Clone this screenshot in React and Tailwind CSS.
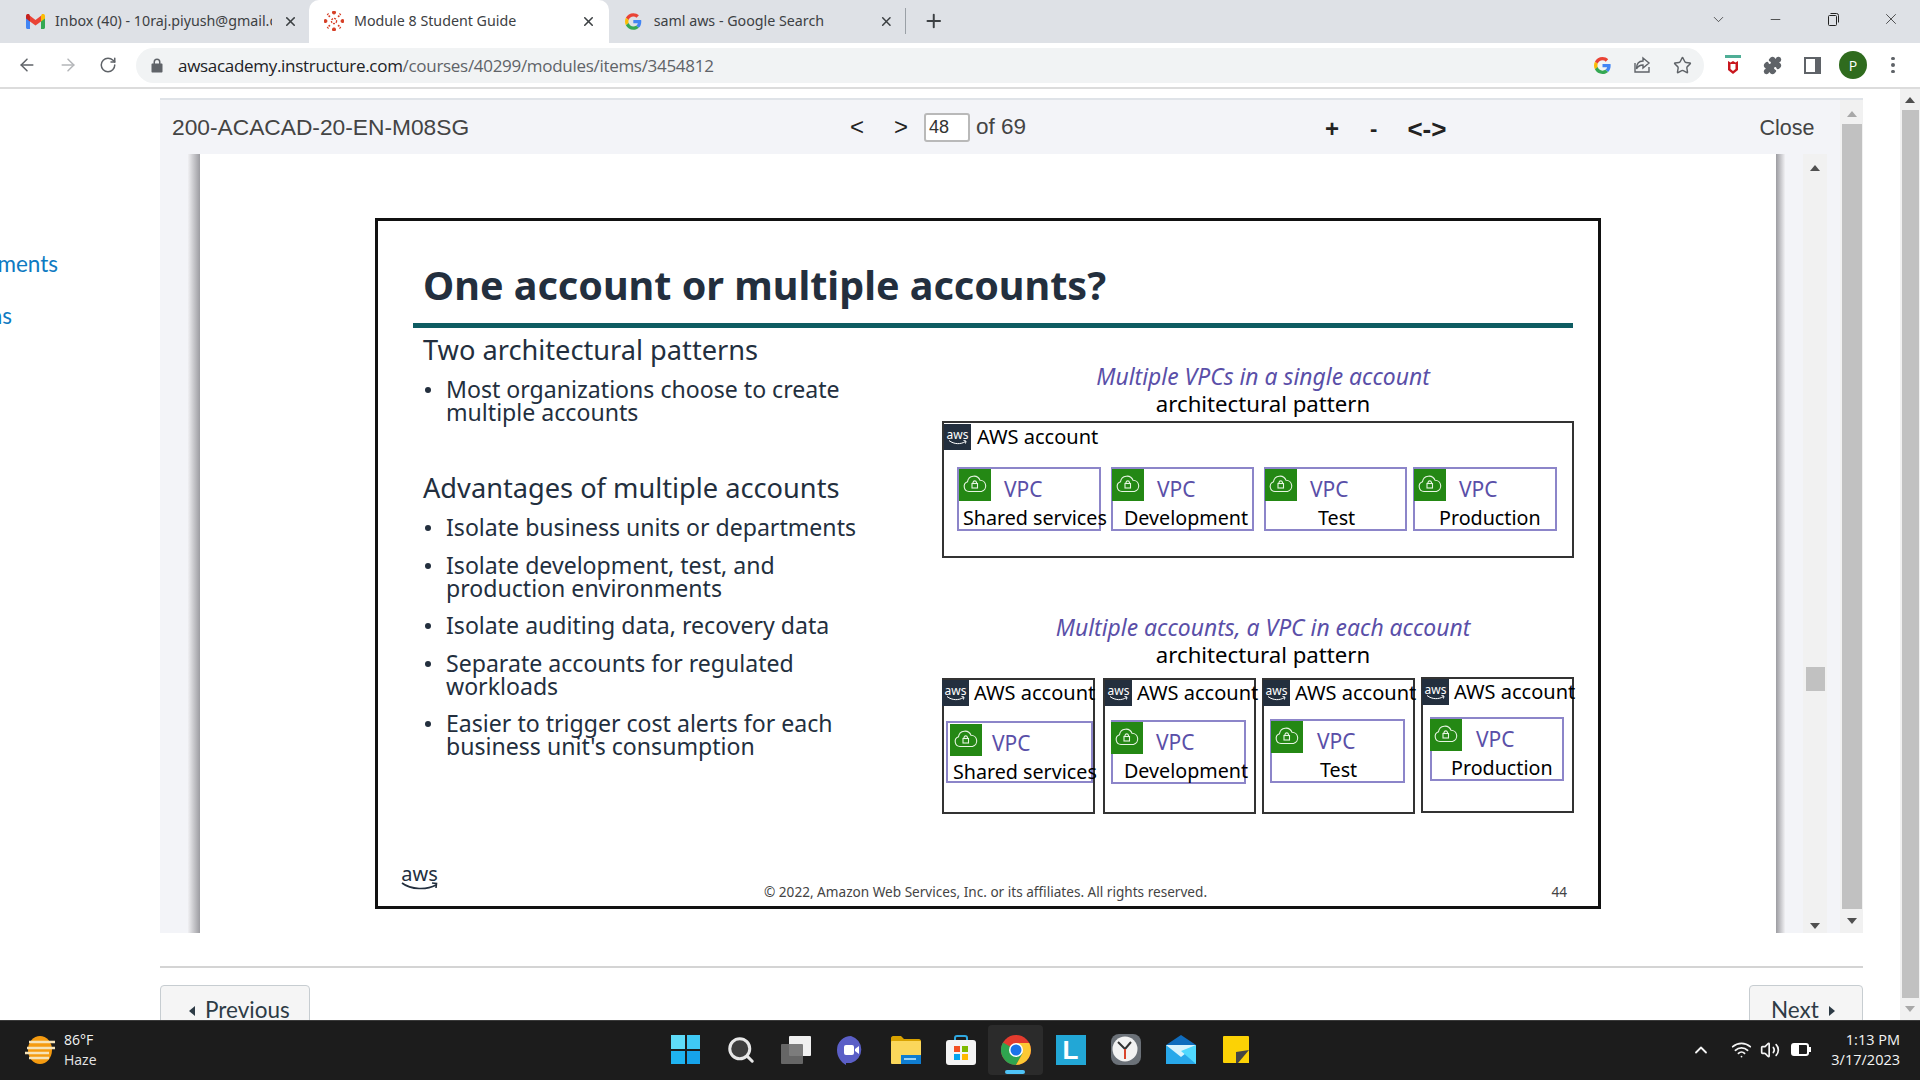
import { ArrowLeft, ArrowRight, RotateCw, X, Plus, ChevronDown, Minus, Star, Puzzle, ChevronUp, Volume2, Wifi, Search } from 'lucide-react';

const slideFont = "font-['Noto_Sans',sans-serif]";
const uiFont = "font-['Open_Sans',sans-serif]";

const GoogleG = ({ size = 18 }) => (
    <svg width={size} height={size} viewBox="0 0 48 48">
        <path fill="#EA4335" d="M24 9.5c3.54 0 6.71 1.22 9.21 3.6l6.85-6.85C35.9 2.38 30.47 0 24 0 14.62 0 6.51 5.38 2.56 13.22l7.98 6.19C12.43 13.72 17.74 9.5 24 9.5z" />
        <path fill="#4285F4" d="M46.98 24.55c0-1.57-.15-3.09-.38-4.55H24v9.02h12.94c-.58 2.96-2.26 5.48-4.78 7.18l7.73 6c4.51-4.18 7.09-10.36 7.09-17.65z" />
        <path fill="#FBBC05" d="M10.53 28.59c-.48-1.45-.76-2.99-.76-4.59s.27-3.14.76-4.59l-7.98-6.19C.92 16.46 0 20.12 0 24c0 3.88.92 7.54 2.56 10.78l7.97-6.19z" />
        <path fill="#34A853" d="M24 48c6.48 0 11.93-2.13 15.89-5.81l-7.73-6c-2.15 1.45-4.92 2.3-8.16 2.3-6.26 0-11.57-4.22-13.47-9.91l-7.98 6.19C6.51 42.62 14.62 48 24 48z" />
    </svg>
);

const GmailIcon = () => (
    <svg width="19" height="15" viewBox="0 0 19 15">
        <path fill="#4285F4" d="M0 2v11.5C0 14.3.7 15 1.5 15H4V6z" />
        <path fill="#34A853" d="M15 6v9h2.5c.8 0 1.5-.7 1.5-1.5V2z" />
        <path fill="#EA4335" d="M4 7.5V1.8L9.5 6 15 1.8v5.7L9.5 11.5z" />
        <path fill="#C5221F" d="M0 2c0-2 2.2-2.6 3.2-1.8L4 1.8v5.7L0 4.5z" />
        <path fill="#FBBC05" d="M19 2c0-2-2.2-2.6-3.2-1.8L15 1.8v5.7l4-3z" />
    </svg>
);

const CanvasIcon = () => (
    <svg width="20" height="20" viewBox="0 0 20 20" fill="#d64027">
        <circle cx="10" cy="10" r="2.6" fill="none" stroke="#d64027" strokeWidth="1.3" strokeDasharray="2 1" />
        <path d="M3.4 10A1.9 1.9 0 0 0 .1 8.6a9.9 9.9 0 0 0 0 2.8A1.9 1.9 0 0 0 3.4 10zM16.6 10a1.9 1.9 0 0 0 3.3 1.4 9.9 9.9 0 0 0 0-2.8 1.9 1.9 0 0 0-3.3 1.4zM10 3.4A1.9 1.9 0 0 0 11.4.1a9.9 9.9 0 0 0-2.8 0A1.9 1.9 0 0 0 10 3.4zM10 16.6a1.9 1.9 0 0 0-1.4 3.3 9.9 9.9 0 0 0 2.8 0 1.9 1.9 0 0 0-1.4-3.3z" />
        <circle cx="5.3" cy="5.3" r="1" /><circle cx="14.7" cy="5.3" r="1" /><circle cx="5.3" cy="14.7" r="1" /><circle cx="14.7" cy="14.7" r="1" />
        <path d="M2.9 2.9 5 2 4.5 3.6 3 4.5zM17.1 2.9 15 2l.5 1.6 1.5.9zM2.9 17.1 5 18l-.5-1.6-1.5-.9zM17.1 17.1 15 18l.5-1.6 1.5-.9z" />
    </svg>
);

const Tab = ({ icon, title, active, width, textClass, children }) => (
    <div className={`flex items-center h-[43px] pb-px shrink-0 ${width} ${active ? 'bg-white rounded-t-[10px]' : ''}`}>
        {icon}
        <span className={`overflow-hidden whitespace-nowrap text-[14.25px] text-[#3c4043] ${textClass}`}>{title}</span>
        {children}
    </div>
);

const TabStrip = () => (
    <div className="h-[43px] bg-[#dee1e6] flex items-center shrink-0">
        <Tab
            width="w-[309px] pl-[26px]"
            textClass="w-[217px] ml-[10px]"
            icon={<GmailIcon />}
            title="Inbox (40) - 10raj.piyush@gmail.com"
        >
            <X size={15} strokeWidth={2.5} className="ml-[11px] text-[#3c4043]" />
        </Tab>
        <Tab
            active
            width="w-[300px] pl-[15px]"
            textClass="w-[218px] ml-[10px]"
            icon={<CanvasIcon />}
            title="Module 8 Student Guide"
        >
            <X size={15} strokeWidth={2.5} className="ml-[9px] text-[#3c4043]" />
        </Tab>
        <Tab
            width="w-[336px] pl-[16px]"
            textClass="w-[230px] ml-[12px]"
            icon={<GoogleG size={17} />}
            title="saml aws - Google Search"
        >
            <X size={15} strokeWidth={2.5} className="text-[#3c4043]" />
            <div className="w-px h-[26px] bg-[#9aa0a6] ml-[12px]" />
            <Plus size={22} strokeWidth={2.2} className="ml-[17px] text-[#3c4043]" />
        </Tab>
        <div className="ml-auto flex items-center h-full pb-[5px] text-[#222]">
            <ChevronDown size={17} strokeWidth={1} className="mr-[41px]" />
            <Minus size={15} strokeWidth={1.2} className="mr-[43px]" />
            <svg width="14" height="14" viewBox="0 0 14 14" fill="none" stroke="#222" className="mr-[42px]">
                <rect x="2.5" y="3.5" width="8" height="10" rx="1" />
                <path d="M4.5 1.5h6a2 2 0 0 1 2 2v7" />
            </svg>
            <X size={18} strokeWidth={1} className="mr-[20px]" />
        </div>
    </div>
);

const Toolbar = () => (
    <div className="h-[46px] bg-white border-b-2 border-[#dcdcdc] flex items-center shrink-0">
        <ArrowLeft size={20} strokeWidth={1.8} className="ml-[17px] text-[#5f6368]" />
        <ArrowRight size={20} strokeWidth={1.8} className="ml-[21px] text-[#b4b6b9]" />
        <RotateCw size={18} strokeWidth={2} className="ml-[21px] text-[#5f6368]" />
        <div className="ml-[19px] w-[1568px] h-[35px] bg-[#f1f3f4] rounded-full flex items-center">
            <svg width="12" height="15" viewBox="0 0 12 15" className="ml-[15px]" fill="#5f6368">
                <path d="M1.5 5.5h1V4a3.5 3.5 0 0 1 7 0v1.5h1c.6 0 1 .4 1 1v7c0 .6-.4 1-1 1h-9c-.6 0-1-.4-1-1v-7c0-.6.4-1 1-1zM4 5.5h4V4a2 2 0 0 0-4 0z" />
            </svg>
            <span className={`ml-[15px] text-[17px] leading-none whitespace-nowrap text-[#202124] ${uiFont} tracking-[-0.3px]`}>
                awsacademy.instructure.com<span className="text-[#5f6368]">/courses/40299/modules/items/3454812</span>
            </span>
            <div className="ml-auto flex items-center">
                <GoogleG size={17} />
                <svg width="20" height="20" viewBox="0 0 20 20" fill="none" stroke="#5f6368" strokeWidth="1.4" className="ml-[21px]">
                    <path d="M3 8v9h14v-5" />
                    <path d="M11 3l6 5-6 5v-3c-3 0-5 1-6.500 4 0-5 2.500-8 6.500-8z" />
                </svg>
                <Star size={19} strokeWidth={1.8} className="ml-[21px] mr-[12px] text-[#5f6368]" />
            </div>
        </div>
        <svg width="16" height="20" viewBox="0 0 16 20" className="ml-[21px]">
            <rect x="0" y="0" width="16" height="3" fill="#4fae96" />
            <path d="M3 6l2.500 1.500L8 6l2.500 1.500L13 6v9l-5 4-5-4z" fill="#c8161d" />
            <path d="M5.500 9h5v5l-2.500 2-2.500-2z" fill="#fff" />
        </svg>
        <Puzzle size={19} fill="#5f6368" className="ml-[22px] text-[#5f6368]" />
        <div className="ml-[22px] w-[17px] h-[17px] border-2 border-[#5f6368] border-r-[6px]" />
        <div className="ml-[18px] w-[28px] h-[28px] rounded-full bg-[#2f6b1e] flex items-center justify-center text-white text-[14px] font-['Open_Sans',sans-serif]">P</div>
        <div className="ml-[24px] flex flex-col gap-[3px]">
            <div className="w-[3.5px] h-[3.5px] rounded-full bg-[#5f6368]" />
            <div className="w-[3.5px] h-[3.5px] rounded-full bg-[#5f6368]" />
            <div className="w-[3.5px] h-[3.5px] rounded-full bg-[#5f6368]" />
        </div>
    </div>
);

const Tri = ({ dir = 'up', color = '#505050', className = '' }) => (
    <svg width="10" height="6" viewBox="0 0 10 6" className={className}>
        <path d={dir === 'up' ? 'M5 0l5 6H0z' : 'M0 0h10L5 6z'} fill={color} />
    </svg>
);

const SideTri = ({ dir, className = '' }) => (
    <svg width="8" height="10" viewBox="0 0 8 10" className={className}>
        <path d={dir === 'left' ? 'M7 0v10L1 5z' : 'M1 0v10l6-5z'} fill="#2d3b45" />
    </svg>
);

const AwsMark = ({ className = '' }) => (
    <div className={`bg-[#232f3e] shrink-0 flex flex-col items-center justify-center text-white ${className}`}>
        <span className={`text-[12px] leading-[11px] ${slideFont}`}>aws</span>
        <svg width="19" height="5" viewBox="0 0 19 5" fill="none" stroke="#fff" strokeWidth="1">
            <path d="M1 0.500c5 4 12 4 16.500 1M15.500 0.500l2.500 0.500-0.500 2.500" />
        </svg>
    </div>
);

const VpcIcon = ({ className = '' }) => (
    <div className={`w-[32px] h-[32px] bg-[#248814] shrink-0 flex items-center justify-center ${className}`}>
        <svg width="26" height="24" viewBox="0 0 26 24" fill="none" stroke="#e8f5e4" strokeWidth="1.1" className="-mt-[3px]">
            <path d="M7 19.500a5 5 0 0 1-1.500-9.700 6.500 6.500 0 0 1 12.500-1.500 5.700 5.700 0 0 1 1.500 11.200z" />
            <rect x="10" y="11.500" width="5.500" height="4.500" />
            <path d="M11 11.500v-1.200a1.800 1.800 0 0 1 3.500 0v1.200" />
        </svg>
    </div>
);

const Vpc = ({ label, box, iconClass = '', vpcClass = 'ml-[13px]', labelClass }) => (
    <div className={`border-2 border-[#8c85c9] shrink-0 ${box}`}>
        <div className="flex items-start h-[37px]">
            <VpcIcon className={iconClass} />
            <span className={`mt-[7px] text-[21px] leading-[26px] text-[#5a4fa8] ${vpcClass}`}>VPC</span>
        </div>
        <div className={`text-[19.7px] leading-[24px] text-black whitespace-nowrap ${labelClass}`}>{label}</div>
    </div>
);

const Account = ({ box, logoClass = '', children }) => (
    <div className={`border-2 border-[#333] h-[136px] shrink-0 ${box}`}>
        <div className="flex items-start">
            <AwsMark className={`h-[26px] w-[27px] ${logoClass}`} />
            <span className="ml-[5px] text-[20px] leading-[26px] text-black whitespace-nowrap">AWS account</span>
        </div>
        {children}
    </div>
);

const Bullet = ({ lines }) => (
    <div className="flex mb-[14.500px]">
        <div className="w-[23px] pt-[9px] pl-[2px] shrink-0">
            <div className="w-[6px] h-[6px] rounded-full bg-[#232f3e]" />
        </div>
        <div className="text-[23.1px] leading-[23px] text-[#232f3e] whitespace-nowrap">
            {lines.map((line) => <div key={line}>{line}</div>)}
        </div>
    </div>
);

const DiagramHeading = ({ text, top }) => (
    <div className={`pl-[10px] text-center ${top}`}>
        <div className="text-[22.9px] leading-[30px] italic text-[#5a4fa8] whitespace-nowrap">{text}</div>
    </div>
);

const Slide = () => (
    <div className={`ml-[175px] mt-[64px] w-[1226px] h-[691px] border-[3px] border-[#111] flex flex-col ${slideFont}`}>
        <h1 className="mt-[39px] ml-[45px] text-[39.5px] leading-[50px] font-bold text-[#232f3e] whitespace-nowrap">One account or multiple accounts?</h1>
        <div className="mt-[13px] ml-[35px] w-[1160px] h-[5px] bg-[#0e5c62]" />

        <div className="flex">
            {/* Left column */}
            <div className="w-[564px] pl-[45px] shrink-0">
                <div className="mt-[6px] text-[27.2px] leading-[32px] text-[#232f3e]">Two architectural patterns</div>
                <div className="mt-[12px]">
                    <Bullet lines={['Most organizations choose to create', 'multiple accounts']} />
                </div>
                <div className="mt-[48px] text-[27.2px] leading-[32px] text-[#232f3e]">Advantages of multiple accounts</div>
                <div className="mt-[12px]">
                    <Bullet lines={['Isolate business units or departments']} />
                    <Bullet lines={['Isolate development, test, and', 'production environments']} />
                    <Bullet lines={['Isolate auditing data, recovery data']} />
                    <Bullet lines={['Separate accounts for regulated', 'workloads']} />
                    <Bullet lines={['Easier to trigger cost alerts for each', "business unit's consumption"]} />
                </div>
            </div>

            {/* Right column */}
            <div className="w-[632px] shrink-0">
                <DiagramHeading top="mt-[34px]" text="Multiple VPCs in a single account" />
                <div className="pl-[10px] text-center text-[22.2px] leading-[24px] text-black">architectural pattern</div>
                <div className="mt-[5px] pt-px border-2 border-[#333] h-[137px]">
                    <div className="flex items-start">
                        <AwsMark className="h-[26px] w-[27px]" />
                        <span className="ml-[6px] text-[20px] leading-[26px] text-black">AWS account</span>
                    </div>
                    <div className="flex ml-[13px] mt-[17px]">
                        <Vpc box="w-[144px] h-[64px]" label="Shared services" labelClass="pl-[4px]" />
                        <Vpc box="w-[143px] h-[64px] ml-[10px]" iconClass="-ml-px" label="Development" labelClass="pl-[11px]" />
                        <Vpc box="w-[143px] h-[64px] ml-[10px]" iconClass="-ml-px" label="Test" labelClass="pl-[52px]" />
                        <Vpc box="w-[144px] h-[64px] ml-[6px]" iconClass="-ml-px" label="Production" labelClass="pl-[24px]" />
                    </div>
                </div>

                <DiagramHeading top="mt-[55px]" text="Multiple accounts, a VPC in each account" />
                <div className="pl-[10px] text-center text-[22.2px] leading-[24px] text-black">architectural pattern</div>
                <div className="mt-[11px] flex items-start">
                    <Account box="w-[153px]" logoClass="-ml-[2px]">
                        <Vpc box="w-[147px] h-[62px] ml-[2px] mt-[15px]" iconClass="ml-[2px] mt-px" vpcClass="ml-[10px]" label="Shared services" labelClass="pl-[5px]" />
                    </Account>
                    <Account box="w-[153px] ml-[8px]">
                        <Vpc box="w-[135px] h-[64px] ml-[6px] mt-[14px]" iconClass="-ml-[2px]" label="Development" labelClass="pl-[11px]" />
                    </Account>
                    <Account box="w-[153px] ml-[6px]" logoClass="-ml-px">
                        <Vpc box="w-[135px] h-[64px] ml-[6px] mt-[13px]" iconClass="-ml-px" vpcClass="ml-[14px]" label="Test" labelClass="pl-[48px]" />
                    </Account>
                    <Account box="w-[153px] ml-[6px] -mt-px" logoClass="-ml-px">
                        <Vpc box="w-[134px] h-[64px] ml-[7px] mt-[12px]" iconClass="-ml-[2px]" vpcClass="ml-[14px]" label="Production" labelClass="pl-[19px]" />
                    </Account>
                </div>
            </div>
        </div>

        {/* Footer */}
        <div className="mt-auto flex items-end mb-[5px]">
            <div className="ml-[23px] w-[37px] mb-[11px] flex flex-col items-center text-[#232f3e]">
                <span className="text-[20px] leading-[16px]">aws</span>
                <svg width="37" height="8" viewBox="0 0 37 8" fill="none" stroke="#232f3e" strokeWidth="1.600">
                    <path d="M1 1c9 7 25 7 34 2M31 1l4.500 0.500-0.500 4.500" />
                </svg>
            </div>
            <span className="ml-[326px] text-[13.6px] leading-[18px] text-[#444] whitespace-nowrap">© 2022, Amazon Web Services, Inc. or its affiliates. All rights reserved.</span>
            <span className="ml-auto mr-[31px] text-[13.6px] leading-[18px] text-[#444]">44</span>
        </div>
    </div>
);

const Viewer = () => (
    <div className="h-[835px] flex bg-[#f3f4f8] border-t-2 border-[#dfe3e8] font-['Liberation_Sans',sans-serif]">
        <div className="w-[1680px] flex flex-col shrink-0">
            <div className="h-[54px] flex items-center text-[#444] shrink-0">
                <span className="ml-[12px] w-[678px] text-[22.75px] whitespace-nowrap">200-ACACAD-20-EN-M08SG</span>
                <span className="text-[24px] text-[#222]">&lt;</span>
                <span className="ml-[30px] text-[24px] text-[#222]">&gt;</span>
                <div className="ml-[16px] w-[46px] h-[29px] bg-white border-2 border-[#b9b9b9] rounded-[3px] text-[18px] text-[#333] pl-[3px] leading-[25px]">48</div>
                <span className="ml-[6px] text-[22.5px]">of 69</span>
                <span className="mt-[3px] ml-[299px] text-[24px] font-bold text-[#222] leading-none">+</span>
                <span className="mt-[3px] ml-[31px] text-[22px] font-bold text-[#222] leading-none">-</span>
                <span className="mt-[3px] ml-[30px] text-[26px] text-[#222] leading-none font-bold">&lt;-&gt;</span>
                <span className="mt-[2px] ml-[313px] text-[21.5px]">Close</span>
            </div>
            <div className="flex-1 flex min-h-0">
                <div className="ml-[28px] w-[12px] bg-linear-to-r from-[#f0f0f3] to-[#9c9ca1] shrink-0" />
                <div className="w-[1576px] bg-white shrink-0">
                    <Slide />
                </div>
                <div className="w-[9px] bg-linear-to-r from-[#9c9ca1] to-[#f0f0f3] shrink-0" />
                <div className="ml-[18px] w-[24px] bg-[#f1f1f1] shrink-0 flex flex-col items-center pt-[11px] pb-[4px]">
                    <Tri />
                    <div className="mt-[496px] w-[19px] h-[24px] bg-[#c1c1c1]" />
                    <Tri dir="down" className="mt-auto" />
                </div>
            </div>
        </div>
        <div className="w-[23px] bg-[#f1f1f1] flex flex-col items-center shrink-0">
            <Tri color="#a8a8a8" className="mt-[11px]" />
            <div className="mt-[7px] w-[20px] h-[785px] bg-[#c1c1c1]" />
            <Tri dir="down" className="mt-[9px]" />
        </div>
    </div>
);

const PageButton = ({ className, children }) => (
    <div className={`h-[60px] bg-[#f5f5f5] border border-[#c7cdd1] rounded-t-[4px] flex items-start pt-[9px] text-[22.5px] leading-[30px] text-[#2d3b45] font-['Lato',sans-serif] ${className}`}>
        {children}
    </div>
);

const Main = () => (
    <div className="flex-1 flex min-h-0 overflow-hidden">
        <div className="w-[160px] shrink-0 pt-[161px] font-['Lato',sans-serif] text-[22.5px] leading-[28px] text-[#0e7ac2]">
            <div className="w-[58px] overflow-hidden flex justify-end whitespace-nowrap">Assignments</div>
            <div className="mt-[24px] w-[12px] overflow-hidden flex justify-end whitespace-nowrap">Discussions</div>
        </div>
        <div className="w-[1703px] shrink-0 pt-[9px]">
            <Viewer />
            <div className="mt-[33px] h-[2px] bg-[#d4d4d4]" />
            <div className="mt-[17px] flex justify-between">
                <PageButton className="w-[150px] pl-[27px]">
                    <SideTri dir="left" className="mt-[11px] mr-[9px]" />
                    Previous
                </PageButton>
                <PageButton className="w-[114px] pl-[21px]">
                    Next
                    <SideTri dir="right" className="mt-[11px] ml-[9px]" />
                </PageButton>
            </div>
        </div>
        <div className="ml-[37px] w-[20px] bg-[#f1f1f1] flex flex-col items-center shrink-0 pt-[8px]">
            <Tri />
            <div className="mt-[7px] w-[17px] h-[888px] bg-[#c1c1c1]" />
            <Tri dir="down" color="#a8a8a8" className="mt-[8px]" />
        </div>
    </div>
);

const Win11 = () => (
    <div className="grid grid-cols-2 gap-[2px] w-[29px] h-[29px]">
        <div className="bg-[#5fdcf8]" /><div className="bg-[#3fc9f5]" />
        <div className="bg-[#1fb3f0]" /><div className="bg-[#16a3ea]" />
    </div>
);

const taskIcons = [
    <Win11 key="win" />,
    <Search key="search" size={30} strokeWidth={2.4} fill="#3f3f3f" className="text-[#e8e8e8]" />,
    <div key="tasks" className="relative w-[30px] h-[28px]">
        <div className="absolute right-0 top-0 w-[22px] h-[20px] bg-[#f0f0f0] rounded-[1px]" />
        <div className="absolute left-0 bottom-0 w-[22px] h-[20px] bg-[#6f6f6f]/90 rounded-[1px]" />
    </div>,
    <svg key="chat" width="30" height="30" viewBox="0 0 30 30">
        <path d="M15 1a14 14 0 0 1 0 27h-5v2c-5-3-9-8-9-15A14 14 0 0 1 15 1z" fill="#5b5fc7" />
        <rect x="8" y="10" width="10" height="10" rx="2" fill="#fff" />
        <path d="M19 14l4-3v8l-4-3z" fill="#fff" />
    </svg>,
    <svg key="files" width="30" height="28" viewBox="0 0 30 28">
        <path d="M0 2c0-1 1-2 2-2h8l3 3h15c1 0 2 1 2 2v4H0z" fill="#d9a200" />
        <rect y="5" width="30" height="23" rx="1" fill="#fbd75b" />
        <rect x="10" y="19" width="20" height="9" fill="#0f7dd1" />
        <rect x="13" y="22" width="12" height="2" fill="#9bd3f7" />
    </svg>,
    <svg key="store" width="30" height="30" viewBox="0 0 30 30">
        <path d="M9 6V3c0-1 1-2 2-2h8c1 0 2 1 2 2v3" fill="none" stroke="#2fa8e0" strokeWidth="2" />
        <rect y="5" width="30" height="25" rx="3" fill="#f4f4f4" />
        <rect x="8" y="11" width="6" height="6" fill="#f25022" /><rect x="16" y="11" width="6" height="6" fill="#7fba00" />
        <rect x="8" y="19" width="6" height="6" fill="#00a4ef" /><rect x="16" y="19" width="6" height="6" fill="#ffb900" />
    </svg>,
    <svg key="chrome" width="30" height="30" viewBox="0 0 30 30">
        <circle cx="15" cy="15" r="15" fill="#e33b2e" />
        <path d="M15 15 2 7.500A15 15 0 0 0 15 30l7-12z" fill="#2fa44f" />
        <path d="M15 8h13.200A15 15 0 0 1 15 30l6.500-11.500z" fill="#fcc934" />
        <circle cx="15" cy="15" r="7" fill="#fff" />
        <circle cx="15" cy="15" r="5.500" fill="#1a73e8" />
    </svg>,
    <div key="l" className="w-[30px] h-[30px] bg-[#22a7d6] flex items-center justify-center text-white font-bold text-[26px] leading-none font-['Liberation_Sans',sans-serif]">L</div>,
    <svg key="clock" width="30" height="31" viewBox="0 0 30 31">
        <rect x="0" y="0" width="30" height="31" rx="8" fill="#6b7178" />
        <circle cx="14" cy="15" r="12.500" fill="#f2f2f2" />
        <path d="M14 15 7 8M14 15l6-7" stroke="#333" strokeWidth="2" />
        <path d="M14 15v10" stroke="#d9442b" strokeWidth="2" />
    </svg>,
    <svg key="mail" width="30" height="29" viewBox="0 0 30 29">
        <path d="M15 0l15 10v4H0v-4z" fill="#0f6cbd" />
        <path d="M0 10h30v19H0z" fill="#28a8ea" />
        <path d="M0 10h30L15 22z" fill="#d8f3fd" />
        <path d="M15 16 30 29V10z" fill="#50d9ff" />
    </svg>,
    <svg key="note" width="26" height="27" viewBox="0 0 26 27">
        <rect width="26" height="27" rx="1" fill="#fcd205" />
        <path d="M26 14v13H13V26z" fill="#fcd205" />
        <path d="M13 27V16l13-2-11 13z" fill="#444" />
    </svg>,
];

const Taskbar = () => (
    <div className="h-[60px] bg-[#1c1c1c] border-t border-[#3a3a3a] flex items-center shrink-0 pb-[2px] text-[#f4f4f4] font-['Open_Sans',sans-serif]">
        <div className="w-[658px] shrink-0 flex items-center pl-[25px]">
            <svg width="30" height="28" viewBox="0 0 30 28">
                <ellipse cx="15" cy="14" rx="12" ry="14" fill="#f59b10" />
                <path d="M4 6h26M2 12h28M0 17h24M4 22h20" stroke="#f6e3b8" strokeWidth="2.500" />
            </svg>
            <div className="ml-[9px] text-[14px] leading-[20px]">
                <div>86°F</div>
                <div className="text-[#e4e4e4]">Haze</div>
            </div>
        </div>
        <div className="flex items-center">
            {taskIcons.map((icon, i) => (
                <div key={i} className={`relative w-[55px] h-[50px] flex items-center justify-center ${i === 6 ? 'bg-[#2b2b2b] rounded-[4px]' : ''}`}>
                    {icon}
                    {i === 6 && <div className="absolute bottom-[1px] left-[17px] w-[20px] h-[4px] rounded-full bg-[#4fc3f7]" />}
                </div>
            ))}
        </div>
        <div className="flex-1 flex items-center">
            <ChevronUp size={20} strokeWidth={2.2} className="ml-[428px]" />
            <Wifi size={21} className="ml-[20px]" />
            <Volume2 size={20} className="ml-[8px]" />
            <div className="ml-[11px] w-[18px] h-[13px] border-2 border-white rounded-[3px] flex">
                <div className="w-[6px] bg-white" />
            </div>
            <div className="w-[2px] h-[5px] bg-white" />
            <div className="ml-auto mr-[20px] text-right text-[14.5px] leading-[20px]">
                <div>1:13 PM</div>
                <div>3/17/2023</div>
            </div>
        </div>
    </div>
);

export default function App() {
    return (
        <div className="w-[1920px] h-[1080px] overflow-hidden flex flex-col bg-white">
            <TabStrip />
            <Toolbar />
            <Main />
            <Taskbar />
        </div>
    );
}
